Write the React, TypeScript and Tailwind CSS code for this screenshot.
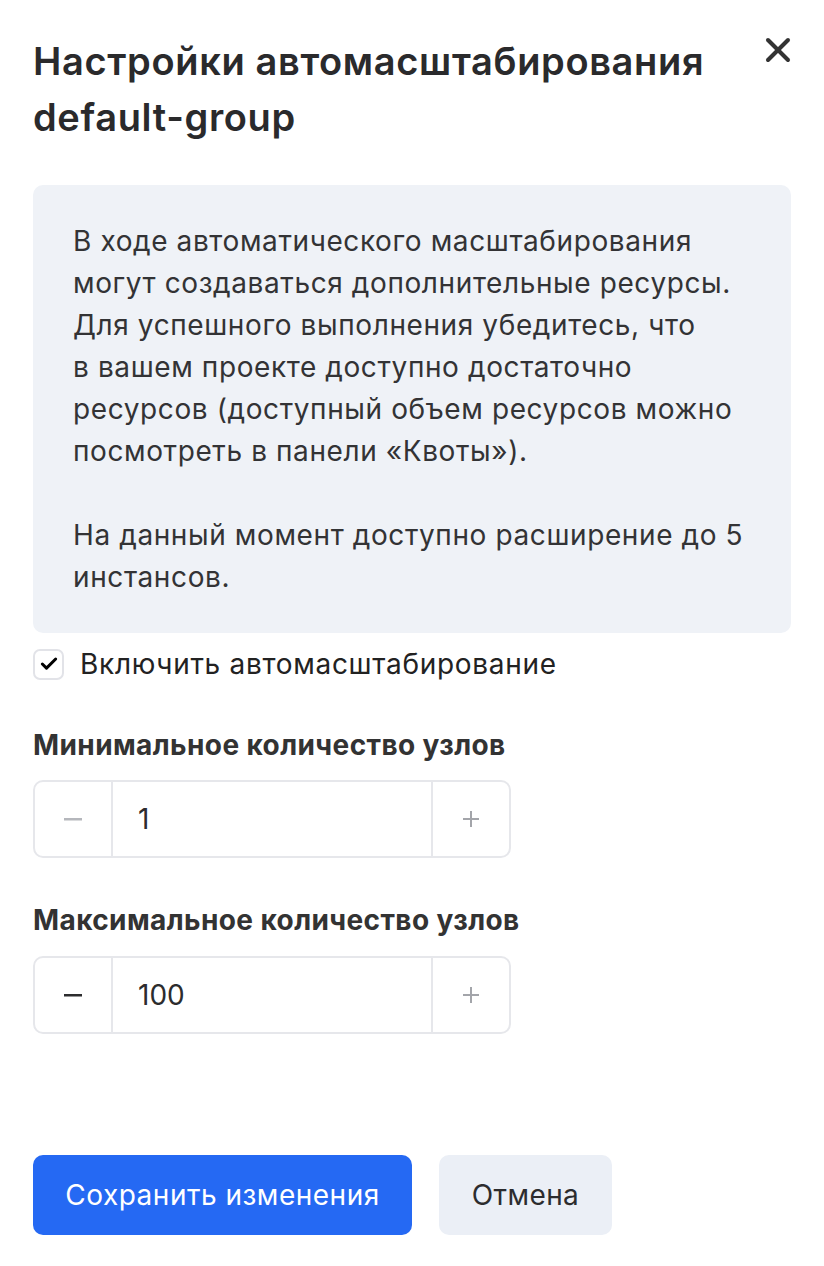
import { Check, X } from 'lucide-react'

const Stepper = ({ value, minusDisabled }: { value: string; minusDisabled?: boolean }) => {
  return (
    <div className="flex h-[78px] w-[478px] rounded-[10px] border-2 border-[#e6e7eb]">
      <div className={`flex w-[76px] items-center justify-center ${minusDisabled ? 'text-[#b5b7bc]' : 'text-[#2c2c2e]'}`}>
        <svg width="18" height="3" viewBox="0 0 18 3">
          <rect width="18" height="2.5" fill="currentColor" />
        </svg>
      </div>
      <div className="flex flex-1 items-center border-x-2 border-[#e6e7eb] pl-[25px] text-[28px] text-[#2c2c2e]">
        {value}
      </div>
      <div className="flex w-[76px] items-center justify-center text-[#a3a5aa]">
        <svg width="16" height="16" viewBox="0 0 16 16">
          <rect x="0" y="7" width="16" height="2" fill="currentColor" />
          <rect x="7" y="0" width="2" height="16" fill="currentColor" />
        </svg>
      </div>
    </div>
  )
}

const App = () => {
  return (
    <div className="min-h-[1266px] w-[824px] bg-white font-['Inter',sans-serif] text-[#2c2c2e]">
      <div className="px-[33px] pt-[33px]">
        <div className="flex items-start justify-between">
          <h1 className="w-[700px] text-[38px] font-semibold leading-[56px] tracking-[0.65px] text-[#2a2a2c]">
            Настройки автомасштабирования default-group
          </h1>
          <X className="-mt-[3px] -mr-[7px] h-[40px] w-[40px] text-[#333]" strokeWidth={2.4} />
        </div>

        <div className="mt-[40px] rounded-[10px] bg-[#eff2f7] px-[40px] pt-[35px] pb-[35px] text-[28px] leading-[42px] tracking-[0.6px] text-[#333335]">
          <p>
            В ходе автоматического масштабирования могут создаваться дополнительные ресурсы. Для
            успешного выполнения убедитесь, что в{'\u00a0'}вашем проекте доступно достаточно
            ресурсов (доступный объем ресурсов можно посмотреть в панели «Квоты»).
          </p>
          <p className="mt-[42px]">На данный момент доступно расширение до 5 инстансов.</p>
        </div>

        <label className="mt-[13px] flex items-center gap-[16px]">
          <span className="flex h-[31px] w-[31px] items-center justify-center rounded-[7px] border-2 border-[#e2e3e8] bg-white">
            <Check className="h-[20px] w-[20px] text-black" strokeWidth={3.6} />
          </span>
          <span className="text-[28px] leading-[36px] tracking-[0.7px] text-[#222]">Включить автомасштабирование</span>
        </label>

        <div className="mt-[45px] text-[28px] font-bold leading-[36px] tracking-[0.4px] text-[#333]">
          Минимальное количество узлов
        </div>
        <div className="mt-[17px]">
          <Stepper value="1" minusDisabled />
        </div>

        <div className="mt-[44px] text-[28px] font-bold leading-[36px] tracking-[0.4px] text-[#333]">
          Максимальное количество узлов
        </div>
        <div className="mt-[18px]">
          <Stepper value="100" />
        </div>

        <div className="mt-[121px] flex gap-[27px]">
          <button className="h-[80px] w-[379px] rounded-[10px] bg-[#2569f3] text-[28px] tracking-[0.5px] text-white">
            Сохранить изменения
          </button>
          <button className="h-[80px] w-[173px] rounded-[10px] bg-[#ebeff6] text-[28px] tracking-[0.4px] text-[#2c2c2e]">
            Отмена
          </button>
        </div>
      </div>
    </div>
  )
}

export default App
